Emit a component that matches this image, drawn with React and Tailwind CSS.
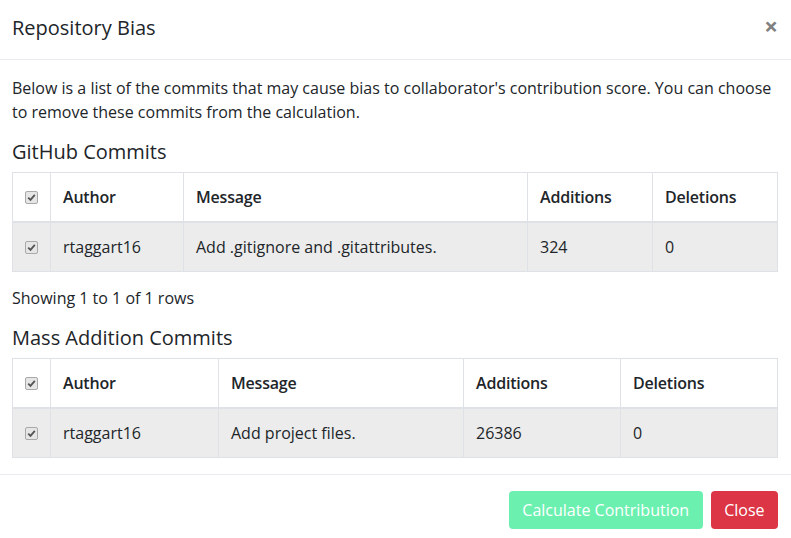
import React from "react";

function Check() {
  return (
    <span className="inline-flex h-[13px] w-[13px] items-center justify-center rounded-[2px] border border-[#a9a9a9] bg-[#e6e6e6] align-middle">
      <svg width="9" height="9" viewBox="0 0 9 9">
        <path d="M1.2 4.6 L3.5 6.9 L7.8 1.8" fill="none" stroke="#555" strokeWidth="1.8" />
      </svg>
    </span>
  );
}

function Table({ cols, row }) {
  const heads = ["Author", "Message", "Additions", "Deletions"];
  return (
    <table className="w-[766px] table-fixed border-collapse border border-[#dee2e6] text-[16px] text-[#212529]">
      <colgroup>
        {cols.map((w, i) => (
          <col key={i} style={{ width: w }} />
        ))}
      </colgroup>
      <thead>
        <tr>
          <th className="h-[49px] border border-b-2 border-[#dee2e6] p-0 text-center align-middle">
            <div className="flex items-center justify-center"><Check /></div>
          </th>
          {heads.map((h) => (
            <th key={h} className="border border-b-2 border-[#dee2e6] px-3 py-3 text-left font-semibold leading-6 tracking-[-0.2px]">
              {h}
            </th>
          ))}
        </tr>
      </thead>
      <tbody>
        <tr className="bg-[#ececec]">
          <td className="h-[49px] border border-[#dee2e6] p-0 text-center align-middle">
            <div className="flex items-center justify-center"><Check /></div>
          </td>
          {row.map((c, i) => (
            <td key={i} className="border border-[#dee2e6] px-3 py-3 leading-6">
              {c}
            </td>
          ))}
        </tr>
      </tbody>
    </table>
  );
}

export default function App() {
  return (
    <div className="h-[538px] w-[791px] overflow-hidden bg-white text-[#212529]" style={{ fontFamily: '"Open Sans", sans-serif' }}>
      <div className="flex h-[60px] items-start justify-between border-b border-[#e9ecef] pl-3 pr-[13px] pt-[12px]">
        <h5 className="mt-[1px] text-[20px] leading-[30px]">Repository Bias</h5>
        <span className="mt-[2px] text-[24px] font-bold leading-none text-[#808080]">×</span>
      </div>
      <div className="pb-4 pl-3 pr-[13px] pt-4">
        <p className="mb-4 text-[16px] leading-6">
          Below is a list of the commits that may cause bias to collaborator's contribution score. You can choose to remove these commits from the calculation.
        </p>
        <h5 className="mb-2 text-[20px] leading-[24px]">GitHub Commits</h5>
        <Table cols={[38, 133, 344, 125, 125]} row={["rtaggart16", "Add .gitignore and .gitattributes.", "324", "0"]} />
        <div className="mb-4 mt-[14px] text-[16px] leading-6">Showing 1 to 1 of 1 rows</div>
        <h5 className="mb-2 text-[20px] leading-[24px]">Mass Addition Commits</h5>
        <Table cols={[38, 168, 245, 157, 157]} row={["rtaggart16", "Add project files.", "26386", "0"]} />
      </div>
      <div className="flex justify-end gap-2 border-t border-[#e9ecef] pl-3 pr-[13px] pt-4">
        <button className="h-[38px] rounded-[4px] bg-[#6cf0b0] px-[13.5px] text-[16px] leading-6 text-white">Calculate Contribution</button>
        <button className="h-[38px] rounded-[4px] bg-[#dc3545] px-[13.5px] text-[16px] leading-6 text-white">Close</button>
      </div>
    </div>
  );
}
